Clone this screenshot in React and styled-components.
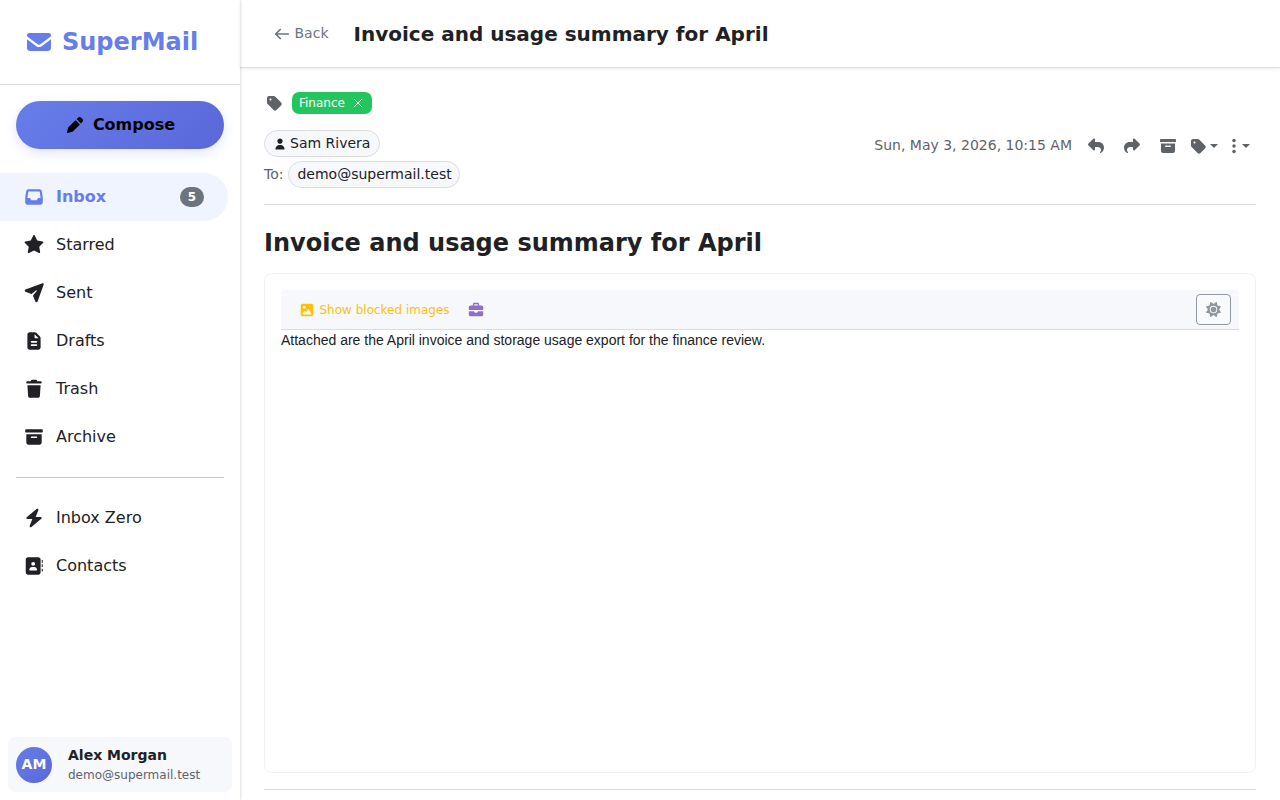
import React from "react";
import styled, { createGlobalStyle } from "styled-components";
import { FaSun } from "react-icons/fa6";

const paths = {
  envelope:
    "M112 128C85.5 128 64 149.5 64 176C64 191.1 71.1 205.3 83.2 214.4L291.2 370.4C308.3 383.2 331.7 383.2 348.8 370.4L556.8 214.4C568.9 205.3 576 191.1 576 176C576 149.5 554.5 128 528 128L112 128zM64 260L64 448C64 483.3 92.7 512 128 512L512 512C547.3 512 576 483.3 576 448L576 260L377.6 408.8C343.5 434.4 296.5 434.4 262.4 408.8L64 260z",
  pen: "M416.9 85.2L372 130.1L509.9 268L554.8 223.1C568.4 209.6 576 191.2 576 172C576 152.8 568.4 134.4 554.8 120.9L519.1 85.2C505.6 71.6 487.2 64 468 64C448.8 64 430.4 71.6 416.9 85.2zM338.1 164L122.9 379.1C112.2 389.8 104.4 403.2 100.3 417.8L64.9 545.6C62.6 553.9 64.9 562.9 71.1 569C77.3 575.1 86.2 577.5 94.5 575.2L222.3 539.7C236.9 535.6 250.2 527.9 261 517.1L476 301.9L338.1 164z",
  inbox:
    "M155.8 96C123.9 96 96.9 119.4 92.4 150.9L64.6 345.2C64.2 348.2 64 351.2 64 354.3L64 480C64 515.3 92.7 544 128 544L512 544C547.3 544 576 515.3 576 480L576 354.3C576 351.3 575.8 348.2 575.4 345.2L547.6 150.9C543.1 119.4 516.1 96 484.2 96L155.8 96zM155.8 160L484.3 160L511.7 352L451.8 352C439.7 352 428.6 358.8 423.2 369.7L408.9 398.3C403.5 409.1 392.4 416 380.3 416L259.9 416C247.8 416 236.7 409.2 231.3 398.3L217 369.7C211.6 358.9 200.5 352 188.4 352L128.3 352L155.8 160z",
  star: "M341.5 45.1C337.4 37.1 329.1 32 320.1 32C311.1 32 302.8 37.1 298.7 45.1L225.1 189.3L65.2 214.7C56.3 216.1 48.9 222.4 46.1 231C43.3 239.6 45.6 249 51.9 255.4L166.3 369.9L141.1 529.8C139.7 538.7 143.4 547.7 150.7 553C158 558.3 167.6 559.1 175.7 555L320.1 481.6L464.4 555C472.4 559.1 482.1 558.3 489.4 553C496.7 547.7 500.4 538.8 499 529.8L473.7 369.9L588.1 255.4C594.5 249 596.7 239.6 593.9 231C591.1 222.4 583.8 216.1 574.8 214.7L415 189.3L341.5 45.1z",
  plane:
    "M568.4 37.7C578.2 34.2 589 36.7 596.4 44C603.8 51.3 606.2 62.2 602.7 72L424.7 568.9C419.7 582.8 406.6 592 391.9 592C377.7 592 364.9 583.4 359.6 570.3L295.4 412.3C290.9 401.3 292.9 388.7 300.6 379.7L395.1 267.3C400.2 261.2 399.8 252.3 394.2 246.7C388.6 241.1 379.6 240.7 373.6 245.8L261.2 340.1C252.1 347.7 239.6 349.7 228.6 345.3L70.1 280.8C57 275.5 48.4 262.7 48.4 248.5C48.4 233.8 57.6 220.7 71.5 215.7L568.4 37.7z",
  file: "M128 128C128 92.7 156.7 64 192 64L341.5 64C358.5 64 374.8 70.7 386.8 82.7L493.3 189.3C505.3 201.3 512 217.6 512 234.6L512 512C512 547.3 483.3 576 448 576L192 576C156.7 576 128 547.3 128 512L128 128zM336 122.5L336 216C336 229.3 346.7 240 360 240L453.5 240L336 122.5zM248 320C234.7 320 224 330.7 224 344C224 357.3 234.7 368 248 368L392 368C405.3 368 416 357.3 416 344C416 330.7 405.3 320 392 320L248 320zM248 416C234.7 416 224 426.7 224 440C224 453.3 234.7 464 248 464L392 464C405.3 464 416 453.3 416 440C416 426.7 405.3 416 392 416L248 416z",
  trash:
    "M232.7 69.9L224 96L128 96C110.3 96 96 110.3 96 128C96 145.7 110.3 160 128 160L512 160C529.7 160 544 145.7 544 128C544 110.3 529.7 96 512 96L416 96L407.3 69.9C402.9 56.8 390.7 48 376.9 48L263.1 48C249.3 48 237.1 56.8 232.7 69.9zM512 208L128 208L149.1 531.1C150.7 556.4 171.7 576 197 576L443 576C468.3 576 489.3 556.4 490.9 531.1L512 208z",
  archive:
    "M64 128C64 110.3 78.3 96 96 96L544 96C561.7 96 576 110.3 576 128L576 160C576 177.7 561.7 192 544 192L96 192C78.3 192 64 177.7 64 160L64 128zM96 240L544 240L544 480C544 515.3 515.3 544 480 544L160 544C124.7 544 96 515.3 96 480L96 240zM248 304C234.7 304 224 314.7 224 328C224 341.3 234.7 352 248 352L392 352C405.3 352 416 341.3 416 328C416 314.7 405.3 304 392 304L248 304z",
  bolt: "M434.8 54.1C446.7 62.7 451.1 78.3 445.7 91.9L367.3 288L512 288C525.5 288 537.5 296.4 542.1 309.1C546.7 321.8 542.8 336 532.5 344.6L244.5 584.6C233.2 594 217.1 594.5 205.2 585.9C193.3 577.3 188.9 561.7 194.3 548.1L272.7 352L128 352C114.5 352 102.5 343.6 97.9 330.9C93.3 318.2 97.2 304 107.5 295.4L395.5 55.4C406.8 46 422.9 45.5 434.8 54.1z",
  contacts:
    "M144 64C108.7 64 80 92.7 80 128V512C80 547.3 108.7 576 144 576H448C483.3 576 512 547.3 512 512V128C512 92.7 483.3 64 448 64ZM264 352H328C372.2 352 408 387.8 408 432C408 440.8 400.8 448 392 448H200C191.2 448 184 440.8 184 432C184 387.8 219.8 352 264 352ZM240 256A56 56 0 1 1 352 256A56 56 0 1 1 240 256ZM544 144H560C568.8 144 576 151.2 576 160V208C576 216.8 568.8 224 560 224H544ZM544 272H560C568.8 272 576 279.2 576 288V336C576 344.8 568.8 352 560 352H544ZM544 400H560C568.8 400 576 407.2 576 416V464C576 472.8 568.8 480 560 480H544Z",
  tag: "M96.5 160L96.5 309.5C96.5 326.5 103.2 342.8 115.2 354.8L307.2 546.8C332.2 571.8 372.7 571.8 397.7 546.8L547.2 397.3C572.2 372.3 572.2 331.8 547.2 306.8L355.2 114.8C343.2 102.7 327 96 310 96L160.5 96C125.2 96 96.5 124.7 96.5 160zM208.5 176C226.2 176 240.5 190.3 240.5 208C240.5 225.7 226.2 240 208.5 240C190.8 240 176.5 225.7 176.5 208C176.5 190.3 190.8 176 208.5 176z",
  user: "M320 312C386.3 312 440 258.3 440 192C440 125.7 386.3 72 320 72C253.7 72 200 125.7 200 192C200 258.3 253.7 312 320 312zM290.3 368C191.8 368 112 447.8 112 546.3C112 562.7 125.3 576 141.7 576L498.3 576C514.7 576 528 562.7 528 546.3C528 447.8 448.2 368 349.7 368L290.3 368z",
  reply:
    "M268.2 82.4C280.2 87.4 288 99 288 112L288 192L400 192C497.2 192 576 270.8 576 368C576 481.3 494.5 531.9 475.8 541.9C473.3 543.2 470.5 544 467.7 544C456.8 544 448 535.1 448 524.3C448 516.8 452.3 509.9 457.8 504.8C467.2 496 480 478.4 480 448.1C480 395.1 437 352.1 384 352.1L288 352.1L288 432.1C288 445 280.2 456.7 268.2 461.7C256.2 466.7 242.5 463.9 233.3 454.8L73.3 294.8C60.8 282.3 60.8 262 73.3 249.5L233.3 89.5C242.5 80.3 256.2 77.6 268.2 82.4z",
  image:
    "M160 96C124.7 96 96 124.7 96 160L96 480C96 515.3 124.7 544 160 544L480 544C515.3 544 544 515.3 544 480L544 160C544 124.7 515.3 96 480 96L160 96zM224 176C250.5 176 272 197.5 272 224C272 250.5 250.5 272 224 272C197.5 272 176 250.5 176 224C176 197.5 197.5 176 224 176zM368 288C376.4 288 384.1 292.4 388.5 299.5L476.5 443.5C481 450.9 481.2 460.2 477 467.8C472.8 475.4 464.7 480 456 480L184 480C175.1 480 166.8 475 162.7 467.1C158.6 459.2 159.2 449.6 164.3 442.3L220.3 362.3C224.8 355.9 232.1 352.1 240 352.1C247.9 352.1 255.2 355.9 259.7 362.3L286.1 400.1L347.5 299.6C351.9 292.5 359.6 288.1 368 288.1z",
  briefcase:
    "M264 112L376 112C380.4 112 384 115.6 384 120L384 160L256 160L256 120C256 115.6 259.6 112 264 112zM208 120L208 160L128 160C92.7 160 64 188.7 64 224L64 320L576 320L576 224C576 188.7 547.3 160 512 160L432 160L432 120C432 89.1 406.9 64 376 64L264 64C233.1 64 208 89.1 208 120zM576 368L384 368L384 384C384 401.7 369.7 416 352 416L288 416C270.3 416 256 401.7 256 384L256 368L64 368L64 480C64 515.3 92.7 544 128 544L512 544C547.3 544 576 515.3 576 480L576 368z",
};

const mailFolders = [
  { name: "Inbox", icon: "inbox", count: 5, active: true },
  { name: "Starred", icon: "star" },
  { name: "Sent", icon: "plane" },
  { name: "Drafts", icon: "file" },
  { name: "Trash", icon: "trash" },
  { name: "Archive", icon: "archive" },
];

const tools = [
  { name: "Inbox Zero", icon: "bolt" },
  { name: "Contacts", icon: "contacts" },
];

const subject = "Invoice and usage summary for April";

function Icon({ name, size = 20, flip }) {
  return (
    <Glyph viewBox="0 0 640 640" width={size} height={size} $flip={flip}>
      <path d={paths[name]} fillRule="evenodd" />
    </Glyph>
  );
}

function NavList({ items }) {
  return (
    <nav>
      {items.map(({ name, icon, count, active }) => (
        <NavItem key={name} $active={active}>
          <Icon name={icon} size={22} />
          <NavText>{name}</NavText>
          {count && <Count>{count}</Count>}
        </NavItem>
      ))}
    </nav>
  );
}

function Sidebar() {
  return (
    <Side>
      <Brand>
        <Icon name="envelope" size={30} />
        SuperMail
      </Brand>
      <Compose>
        <Icon name="pen" />
        Compose
      </Compose>
      <NavList items={mailFolders} />
      <Divider />
      <NavList items={tools} />
      <Profile>
        <Avatar>AM</Avatar>
        <div>
          <ProfileName>Alex Morgan</ProfileName>
          <ProfileMail>demo@supermail.test</ProfileMail>
        </div>
      </Profile>
    </Side>
  );
}

function Message() {
  return (
    <Content>
      <Labels>
        <Icon name="tag" />
        <Label>
          Finance
          <svg width="10" height="10" viewBox="0 0 10 10">
            <Stroke d="M1.2 1.2L8.8 8.8M8.8 1.2L1.2 8.8" $width={0.9} />
          </svg>
        </Label>
      </Labels>
      <Meta>
        <div>
          <Person $end={9}>
            <Icon name="user" size={14} />
            <span>Sam Rivera</span>
          </Person>
          <Recipient>
            <span>To:</span>
            <Person $end={7}>
              <span>demo@supermail.test</span>
            </Person>
          </Recipient>
        </div>
        <Actions>
          <When>Sun, May 3, 2026, 10:15 AM</When>
          <Action>
            <Icon name="reply" />
          </Action>
          <Action>
            <Icon name="reply" flip />
          </Action>
          <Action>
            <Icon name="archive" />
          </Action>
          <Action $width={34} $gap={2}>
            <Icon name="tag" />
            <Caret />
          </Action>
          <Action $width={42} $gap={6}>
            <svg width="4" height="16" viewBox="0 0 4 16">
              <circle cx="2" cy="2.6" r="1.75" />
              <circle cx="2" cy="8" r="1.75" />
              <circle cx="2" cy="13.4" r="1.75" />
            </svg>
            <Caret />
          </Action>
        </Actions>
      </Meta>
      <Subject>{subject}</Subject>
      <Card>
        <Toolbar>
          <Blocked>
            <Icon name="image" size={18} />
            Show blocked images
          </Blocked>
          <Toolbox>
            <Icon name="briefcase" size={18} />
          </Toolbox>
          <ThemeButton>
            <FaSun size={15} />
          </ThemeButton>
        </Toolbar>
        <Body>
          Attached are the April invoice and storage usage export for the
          finance review.
        </Body>
      </Card>
      <BottomLine />
    </Content>
  );
}

function App() {
  return (
    <>
      <GlobalStyle />
      <Layout>
        <Sidebar />
        <Main>
          <Header>
            <Back>
              <svg width="18" height="18" viewBox="0 0 640 640">
                <Stroke
                  d="M96 320H544M256 160L96 320L256 480"
                  $width={62}
                />
              </svg>
              <span>Back</span>
            </Back>
            <Title>{subject}</Title>
          </Header>
          <Message />
        </Main>
      </Layout>
    </>
  );
}

export default App;

const GlobalStyle = createGlobalStyle`
  * {
    box-sizing: border-box;
  }

  body {
    margin: 0;
    background: #fff;
    color: #202124;
    font-family: "DejaVu Sans", sans-serif;
    font-size: 16px;
    overflow: hidden;
  }

  button {
    font-family: inherit;
  }

  svg {
    flex-shrink: 0;
    fill: currentColor;
  }
`;

const Glyph = styled.svg`
  display: block;
  transform: ${(props) => (props.$flip ? "scaleX(-1)" : "none")};
`;

const Stroke = styled.path`
  fill: none;
  stroke: currentColor;
  stroke-width: ${(props) => props.$width};
  stroke-linecap: round;
  stroke-linejoin: round;
`;

const Layout = styled.div`
  display: flex;
  height: 100vh;
`;

const Side = styled.aside`
  display: flex;
  flex-direction: column;
  width: 240px;
  flex-shrink: 0;
  box-shadow: 0 0 3px rgba(0, 0, 0, 0.22);
  z-index: 1;
`;

const Brand = styled.div`
  display: flex;
  align-items: center;
  gap: 8px;
  height: 85px;
  padding: 0 0 0 24px;
  border-bottom: 1px solid #dadce0;
  color: #667eea;
  font-size: 24px;
  font-weight: 700;
`;

const Compose = styled.button`
  display: flex;
  align-items: center;
  justify-content: center;
  gap: 8px;
  height: 48px;
  margin: 16px 16px 23.5px;
  padding: 0 0 1px;
  border: 0;
  border-radius: 24px;
  background: linear-gradient(135deg, #667eea, #5a67d8);
  box-shadow: 0 4px 12px rgba(102, 126, 234, 0.2);
  color: #000;
  font-size: 16px;
  font-weight: 600;
`;

const NavItem = styled.a`
  display: flex;
  align-items: center;
  gap: 11px;
  height: 48px;
  margin-right: 12px;
  padding: 0 24px 0 23px;
  border-radius: 0 24px 24px 0;
  background: ${(props) => (props.$active ? "#f0f4fe" : "transparent")};
  color: ${(props) => (props.$active ? "#667eea" : "#202124")};
  font-weight: ${(props) => (props.$active ? 600 : 400)};
`;

const NavText = styled.span`
  line-height: 24px;
`;

const Count = styled.span`
  min-width: 24px;
  margin-left: auto;
  padding: 4px 8px;
  border-radius: 10px;
  background: #6c757d;
  color: #fff;
  font-size: 12px;
  font-weight: 700;
  line-height: 12px;
`;

const Divider = styled.div`
  height: 1px;
  margin: 16.5px 16px 16px;
  background: #c7c8c8;
`;

const Profile = styled.div`
  display: flex;
  align-items: center;
  gap: 16px;
  height: 55px;
  margin: auto 8px 8px;
  padding: 0 8px;
  border-radius: 8px;
  background: #f6f8fc;
`;

const Avatar = styled.div`
  display: grid;
  place-items: center;
  width: 36px;
  height: 36px;
  padding-bottom: 2px;
  border-radius: 50%;
  background: linear-gradient(135deg, #667eea, #5a67d8);
  color: #fff;
  font-size: 14px;
  font-weight: 600;
`;

const ProfileName = styled.div`
  font-size: 14px;
  font-weight: 600;
  line-height: 20px;
`;

const ProfileMail = styled.div`
  padding-top: 1px;
  color: #5f6368;
  font-size: 12px;
  line-height: 19px;
`;

const Main = styled.main`
  display: flex;
  flex-direction: column;
  flex: 1;
  min-width: 0;
`;

const Header = styled.header`
  display: flex;
  align-items: center;
  gap: 25px;
  height: 68px;
  flex-shrink: 0;
  padding: 0 33px;
  border-bottom: 1px solid #dadce0;
  box-shadow: 0 1px 3px rgba(0, 0, 0, 0.08);
`;

const Back = styled.div`
  display: flex;
  align-items: center;
  gap: 3.5px;
  color: #6c757d;
  font-size: 14px;

  span {
    padding-bottom: 2px;
  }
`;

const Title = styled.h1`
  margin: 0;
  font-size: 20px;
  font-weight: 600;
`;

const Content = styled.section`
  display: flex;
  flex-direction: column;
  flex: 1;
  padding: 24px 24px 0;
`;

const Labels = styled.div`
  display: flex;
  align-items: center;
  gap: 8px;
  height: 22px;
  margin-bottom: 16px;
  color: #5f6368;
`;

const Label = styled.span`
  display: flex;
  align-items: center;
  gap: 8px;
  height: 22px;
  padding: 0 9px 0 7px;
  border-radius: 7px;
  background: #22c55e;
  color: #fff;
  font-size: 12px;
`;

const Meta = styled.div`
  display: flex;
  justify-content: space-between;
  height: 75px;
  border-bottom: 1px solid #dadce0;
`;

const Person = styled.span`
  display: inline-flex;
  align-items: center;
  gap: 3px;
  height: 27px;
  padding: 0 ${(props) => props.$end}px 0 8px;
  border: 1px solid #dadce0;
  border-radius: 14px;
  background: #f6f8fc;
  color: #202124;
  font-size: 14px;

  span {
    padding-bottom: 2px;
  }
`;

const Recipient = styled.div`
  display: flex;
  align-items: center;
  gap: 5px;
  margin-top: 4px;
  color: #5f6368;
  font-size: 14px;

  > span:first-child {
    padding-bottom: 2px;
  }
`;

const Actions = styled.div`
  display: flex;
  align-items: center;
  height: 32px;
  margin-right: -6px;
  color: #5f6368;
`;

const When = styled.span`
  margin-right: 6px;
  padding-bottom: 2px;
  font-size: 14px;
`;

const Action = styled.span`
  display: flex;
  align-items: center;
  justify-content: center;
  gap: ${(props) => props.$gap || 0}px;
  width: ${(props) => props.$width || 36}px;
`;

const Caret = styled.i`
  border-top: 4px solid currentColor;
  border-left: 4px solid transparent;
  border-right: 4px solid transparent;
`;

const Subject = styled.h2`
  margin: 24px 0 15px;
  font-size: 24px;
  font-weight: 600;
  line-height: 29px;
`;

const Card = styled.div`
  height: 500px;
  flex-shrink: 0;
  padding: 16px;
  border: 1px solid #f0f1f3;
  border-radius: 8px;
`;

const Toolbar = styled.div`
  display: flex;
  align-items: center;
  height: 40px;
  padding: 0 8px 0 17px;
  border-bottom: 1px solid #dadce0;
  border-radius: 4px 4px 0 0;
  background: #f6f8fc;
`;

const Blocked = styled.span`
  display: flex;
  align-items: center;
  gap: 3.5px;
  color: #ffc107;
  font-size: 12px;
`;

const Toolbox = styled.span`
  margin-left: 17px;
  color: #8f6fc9;
`;

const ThemeButton = styled.button`
  display: grid;
  place-items: center;
  width: 35px;
  height: 31px;
  margin-left: auto;
  padding: 0;
  border: 1px solid #939aa1;
  border-radius: 4px;
  background: #f9fafd;
  color: #8f969d;
`;

const Body = styled.p`
  margin: 2px 0 0;
  font-family: "Liberation Sans", Arial, sans-serif;
  font-size: 14px;
  line-height: 17px;
`;

const BottomLine = styled.div`
  height: 1px;
  margin-top: 16px;
  background: #dadce0;
`;
